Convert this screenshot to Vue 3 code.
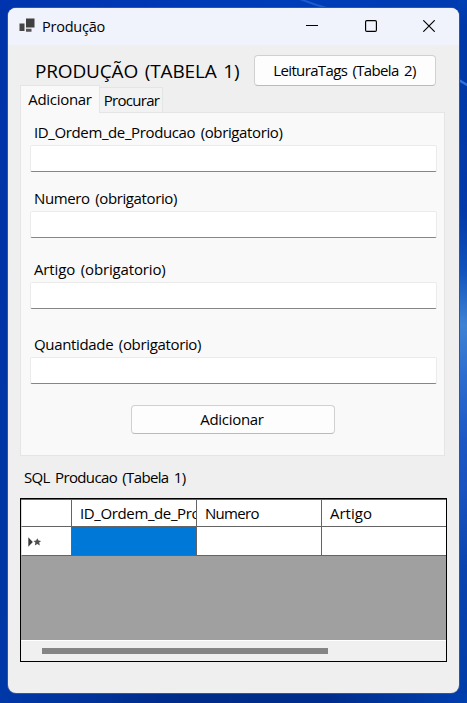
<script setup>
import { ref } from 'vue'

const tab = ref('Adicionar')
const fields = [
  { id: 'ordem', label: 'ID_Ordem_de_Producao (obrigatorio)' },
  { id: 'numero', label: 'Numero (obrigatorio)' },
  { id: 'artigo', label: 'Artigo (obrigatorio)' },
  { id: 'quantidade', label: 'Quantidade (obrigatorio)' },
]
const columns = ['ID_Ordem_de_Pro', 'Numero', 'Artigo']
</script>

<template>
  <div class="desktop">
    <svg class="streaks" viewBox="0 0 467 703" aria-hidden="true">
      <path d="M300 -1 Q315 5 330 9" stroke="#1c5ccb" stroke-width="2" fill="none" />
      <path d="M457 79 L469 86" stroke="#2f74dc" stroke-width="2.5" fill="none" />
    </svg>
    <main class="window">
      <header class="titlebar">
        <svg class="app-icon" width="16" height="16" viewBox="0 0 16 16">
          <path d="M7 0.5h8.5v9H7z" fill="#3f3f3f" />
          <path d="M0.5 5.5h5v7.5h-5z" fill="#454545" />
          <path d="M7 10.7h5.5v3H7z" fill="#555" />
        </svg>
        <span class="caption">Produção</span>
        <div class="controls">
          <svg width="12" height="12" viewBox="0 0 12 12"><path d="M0 5.5h12" /></svg>
          <svg width="12" height="12" viewBox="0 0 12 12"><rect x=".6" y=".6" width="10.8" height="10.8" rx="1.2" /></svg>
          <svg width="12" height="12" viewBox="0 0 12 12"><path d="M.3.3l11.4 11.4M11.7.3L.3 11.7" /></svg>
        </div>
      </header>

      <div class="top">
        <h1>PRODUÇÃO (TABELA 1)</h1>
        <button class="btn tags">LeituraTags (Tabela 2)</button>
      </div>

      <nav class="tabs">
        <button
          v-for="name in ['Adicionar', 'Procurar']"
          :key="name"
          class="tab"
          :class="{ active: tab === name }"
          @click="tab = name"
        >{{ name }}</button>
      </nav>

      <section class="panel">
        <div v-for="f in fields" :key="f.id" class="field" :class="f.id">
          <label :for="f.id">{{ f.label }}</label>
          <input :id="f.id" type="text" />
        </div>
        <button class="btn add">Adicionar</button>
      </section>

      <p class="grid-title">SQL Producao (Tabela 1)</p>

      <section class="datagrid">
        <div class="row head">
          <div class="cell stub"></div>
          <div v-for="c in columns" :key="c" class="cell" :class="c.toLowerCase()">{{ c }}</div>
        </div>
        <div class="row">
          <div class="cell stub">
            <svg width="16" height="12" viewBox="0 0 16 12">
              <path d="M1.3 1.2L5.8 6 1.3 10.8z" fill="#3c3c3c" />
              <path d="M10.3 2.3l1.2 2.3 2.6.3-1.9 1.7.6 2.8-2.5-1.4-2.5 1.4.6-2.8-1.9-1.7 2.6-.3z" fill="#505050" />
            </svg>
          </div>
          <div class="cell selected"></div>
          <div class="cell"></div>
          <div class="cell"></div>
        </div>
        <div class="scrollbar"><div class="thumb"></div></div>
      </section>
    </main>
  </div>
</template>

<style>
body { margin: 0; overflow: hidden; }
</style>

<style scoped>
* { box-sizing: border-box; }
.desktop {
  position: relative;
  width: 467px;
  height: 703px;
  padding: 8px;
  font: 15px/20px "Open Sans", "Noto Sans", sans-serif;
  letter-spacing: -0.38px;
  word-spacing: 2px;
  color: #000;
  background:
    linear-gradient(90deg, #0038a8, #002b88 40%, #002d8c 70%, #003fae) bottom / 100% 10px no-repeat,
    linear-gradient(#0040b4, #0038a8 25px, #0339a8 210px, #1152bc 270px, #3f82d4 325px, #2f6fd0 370px, #1d57c4 440px, #1a53bf 490px, #0b43ae 570px, #003ca8) right / 9px 100% no-repeat,
    linear-gradient(90deg, #0034ae, #003cb8 60%, #003bb2) top / 100% 9px no-repeat,
    linear-gradient(#0033a8, #0035a5 400px, #0035a4 600px, #0038a8);
}
.streaks { position: absolute; inset: 0; width: 467px; height: 703px; }
.window {
  position: relative;
  display: flex;
  flex-direction: column;
  width: 451px;
  height: 685px;
  border-radius: 8px;
  overflow: hidden;
  background: #efefef;
  box-shadow: 0 0 0 1px #31549a;
}
.titlebar {
  display: flex;
  align-items: center;
  flex: none;
  height: 37px;
  padding: 0 24px 0 11px;
  background: #f0f3fb;
}
.app-icon { margin-top: -2px; }
.caption { margin-left: 7px; font-size: 14.5px; letter-spacing: -0.22px; }
.controls { display: flex; gap: 46.5px; margin: -2px 0 0 auto; }
.controls svg { display: block; fill: none; stroke: #000; stroke-width: 1.15; }
.top { display: flex; align-items: flex-start; height: 40px; flex: none; padding: 10px 23px 0 27px; }
h1 { margin: 3px 0 0; width: 219px; font-size: 19px; line-height: 26px; font-weight: 400; letter-spacing: -0.16px; white-space: nowrap; }
.btn {
  display: block;
  padding: 0;
  border: 1px solid #d0d0d0;
  border-bottom-color: #bababa;
  border-radius: 4px;
  background: #fdfdfd;
  font: inherit;
  letter-spacing: inherit;
  word-spacing: inherit;
  color: inherit;
}
.tags { width: 182px; height: 31px; padding: 0 1px 1px 0; letter-spacing: -0.64px; }
.tabs { display: flex; align-items: flex-end; flex: none; height: 27px; padding-left: 12px; }
.tab {
  width: 63px;
  height: 25px;
  padding: 0 0 0 1px;
  border: 1px solid #e5e5e5;
  border-width: 1px 1px 0 0;
  background: #f2f2f2;
  font: inherit;
  letter-spacing: -0.7px;
  color: inherit;
}
.tab.active { position: relative; width: 80px; height: 28px; margin-bottom: -1px; padding: 0 0 2px; border-left-width: 1px; background: #f9f9f9; letter-spacing: -0.3px; }
.panel {
  display: flex;
  flex-direction: column;
  flex: none;
  width: 425px;
  height: 344px;
  margin-left: 12px;
  padding: 9px 8px 0 9px;
  border: 1px solid #e5e5e5;
  background: #f9f9f9;
}
.field { flex: none; height: 66px; }
.numero { height: 71px; }
.numero label { letter-spacing: -0.38px; }
.artigo { height: 75px; }
.artigo label { letter-spacing: -0.15px; }
.quantidade { height: 72px; }
.quantidade label { letter-spacing: -0.34px; }
label { display: block; height: 23px; padding-left: 4px; white-space: nowrap; }
input { display: block; width: 407px; height: 27px; padding: 2px 6px; border: 1px solid #ebebeb; border-bottom-color: #868686; border-radius: 2px; background: #fff; outline: none; font: inherit; }
.add { width: 204px; height: 29px; margin: -1px 0 0 101px; padding: 0 2px 2px 0; letter-spacing: -0.3px; }
.grid-title { margin: 11px 0 11px 16px; height: 20px; letter-spacing: -0.64px; }
.datagrid { display: flex; flex-direction: column; flex: none; width: 427px; height: 164px; margin-left: 12px; border: 1px solid #000; background: #a0a0a0; overflow: hidden; }
.row { display: flex; flex: none; height: 29px; }
.row.head { height: 28px; border-top: 1px solid #646464; }
.cell { width: 125px; flex: none; padding: 3px 0 0 8px; border-right: 1px solid #646464; border-bottom: 1px solid #646464; background: #fff; overflow: hidden; white-space: nowrap; }
.cell:last-child { flex: 1; width: auto; border-right: 0; }
.cell.stub { width: 51px; border-left: 1px solid #ddd; padding: 9px 0 0 5px; }
.head .numero { height: auto; letter-spacing: -0.7px; }
.head .artigo { height: auto; letter-spacing: 0; }
.stub svg { display: block; }
.selected { background: #0078d7; }
.scrollbar { height: 21px; margin-top: auto; border-top: 1px solid #fff; padding: 7px 0 0 21px; background: #f0f0f0; }
.thumb { width: 286px; height: 6px; background: #858585; }
</style>
